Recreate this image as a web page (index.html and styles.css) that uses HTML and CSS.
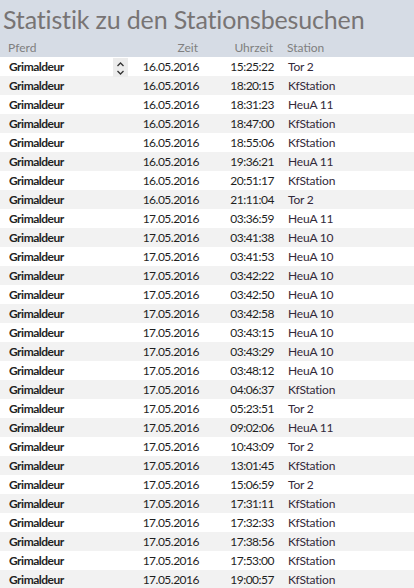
FILE: index.html
```html
<!DOCTYPE html>
<html lang="de">
<head>
<meta charset="utf-8">
<link rel="stylesheet" href="styles.css">
</head>
<body>
<div class="header">
  <h1 class="title">Statistik zu den Stationsbesuchen</h1>
  <div class="row cols">
    <span class="c-name">Pferd</span>
    <span class="c-spin"></span>
    <span class="c-date">Zeit</span>
    <span class="c-time">Uhrzeit</span>
    <span class="c-stat">Station</span>
  </div>
</div>
<div class="list">
  <div class="row item"><span class="c-name">Grimaldeur</span><span class="c-spin"><span class="spinner"><svg width="15" height="19" viewBox="0 0 15 19"><path d="M4.5 8 L7.5 5 L10.5 8" fill="none" stroke="#333" stroke-width="1.3"/><path d="M4.5 13 L7.5 16 L10.5 13" fill="none" stroke="#333" stroke-width="1.3"/></svg></span></span><span class="c-date">16.05.2016</span><span class="c-time">15:25:22</span><span class="c-stat">Tor 2</span></div>
  <div class="row item"><span class="c-name">Grimaldeur</span><span class="c-spin"></span><span class="c-date">16.05.2016</span><span class="c-time">18:20:15</span><span class="c-stat">KfStation</span></div>
  <div class="row item"><span class="c-name">Grimaldeur</span><span class="c-spin"></span><span class="c-date">16.05.2016</span><span class="c-time">18:31:23</span><span class="c-stat">HeuA 11</span></div>
  <div class="row item"><span class="c-name">Grimaldeur</span><span class="c-spin"></span><span class="c-date">16.05.2016</span><span class="c-time">18:47:00</span><span class="c-stat">KfStation</span></div>
  <div class="row item"><span class="c-name">Grimaldeur</span><span class="c-spin"></span><span class="c-date">16.05.2016</span><span class="c-time">18:55:06</span><span class="c-stat">KfStation</span></div>
  <div class="row item"><span class="c-name">Grimaldeur</span><span class="c-spin"></span><span class="c-date">16.05.2016</span><span class="c-time">19:36:21</span><span class="c-stat">HeuA 11</span></div>
  <div class="row item"><span class="c-name">Grimaldeur</span><span class="c-spin"></span><span class="c-date">16.05.2016</span><span class="c-time">20:51:17</span><span class="c-stat">KfStation</span></div>
  <div class="row item"><span class="c-name">Grimaldeur</span><span class="c-spin"></span><span class="c-date">16.05.2016</span><span class="c-time">21:11:04</span><span class="c-stat">Tor 2</span></div>
  <div class="row item"><span class="c-name">Grimaldeur</span><span class="c-spin"></span><span class="c-date">17.05.2016</span><span class="c-time">03:36:59</span><span class="c-stat">HeuA 11</span></div>
  <div class="row item"><span class="c-name">Grimaldeur</span><span class="c-spin"></span><span class="c-date">17.05.2016</span><span class="c-time">03:41:38</span><span class="c-stat">HeuA 10</span></div>
  <div class="row item"><span class="c-name">Grimaldeur</span><span class="c-spin"></span><span class="c-date">17.05.2016</span><span class="c-time">03:41:53</span><span class="c-stat">HeuA 10</span></div>
  <div class="row item"><span class="c-name">Grimaldeur</span><span class="c-spin"></span><span class="c-date">17.05.2016</span><span class="c-time">03:42:22</span><span class="c-stat">HeuA 10</span></div>
  <div class="row item"><span class="c-name">Grimaldeur</span><span class="c-spin"></span><span class="c-date">17.05.2016</span><span class="c-time">03:42:50</span><span class="c-stat">HeuA 10</span></div>
  <div class="row item"><span class="c-name">Grimaldeur</span><span class="c-spin"></span><span class="c-date">17.05.2016</span><span class="c-time">03:42:58</span><span class="c-stat">HeuA 10</span></div>
  <div class="row item"><span class="c-name">Grimaldeur</span><span class="c-spin"></span><span class="c-date">17.05.2016</span><span class="c-time">03:43:15</span><span class="c-stat">HeuA 10</span></div>
  <div class="row item"><span class="c-name">Grimaldeur</span><span class="c-spin"></span><span class="c-date">17.05.2016</span><span class="c-time">03:43:29</span><span class="c-stat">HeuA 10</span></div>
  <div class="row item"><span class="c-name">Grimaldeur</span><span class="c-spin"></span><span class="c-date">17.05.2016</span><span class="c-time">03:48:12</span><span class="c-stat">HeuA 10</span></div>
  <div class="row item"><span class="c-name">Grimaldeur</span><span class="c-spin"></span><span class="c-date">17.05.2016</span><span class="c-time">04:06:37</span><span class="c-stat">KfStation</span></div>
  <div class="row item"><span class="c-name">Grimaldeur</span><span class="c-spin"></span><span class="c-date">17.05.2016</span><span class="c-time">05:23:51</span><span class="c-stat">Tor 2</span></div>
  <div class="row item"><span class="c-name">Grimaldeur</span><span class="c-spin"></span><span class="c-date">17.05.2016</span><span class="c-time">09:02:06</span><span class="c-stat">HeuA 11</span></div>
  <div class="row item"><span class="c-name">Grimaldeur</span><span class="c-spin"></span><span class="c-date">17.05.2016</span><span class="c-time">10:43:09</span><span class="c-stat">Tor 2</span></div>
  <div class="row item"><span class="c-name">Grimaldeur</span><span class="c-spin"></span><span class="c-date">17.05.2016</span><span class="c-time">13:01:45</span><span class="c-stat">KfStation</span></div>
  <div class="row item"><span class="c-name">Grimaldeur</span><span class="c-spin"></span><span class="c-date">17.05.2016</span><span class="c-time">15:06:59</span><span class="c-stat">Tor 2</span></div>
  <div class="row item"><span class="c-name">Grimaldeur</span><span class="c-spin"></span><span class="c-date">17.05.2016</span><span class="c-time">17:31:11</span><span class="c-stat">KfStation</span></div>
  <div class="row item"><span class="c-name">Grimaldeur</span><span class="c-spin"></span><span class="c-date">17.05.2016</span><span class="c-time">17:32:33</span><span class="c-stat">KfStation</span></div>
  <div class="row item"><span class="c-name">Grimaldeur</span><span class="c-spin"></span><span class="c-date">17.05.2016</span><span class="c-time">17:38:56</span><span class="c-stat">KfStation</span></div>
  <div class="row item"><span class="c-name">Grimaldeur</span><span class="c-spin"></span><span class="c-date">17.05.2016</span><span class="c-time">17:53:00</span><span class="c-stat">KfStation</span></div>
  <div class="row item"><span class="c-name">Grimaldeur</span><span class="c-spin"></span><span class="c-date">17.05.2016</span><span class="c-time">19:00:57</span><span class="c-stat">KfStation</span></div>
</div>
</body>
</html>
```

FILE: styles.css
```css
html, body {
  margin: 0;
  padding: 0;
  background: #ffffff;
  font-family: "Lato", "Open Sans", sans-serif;
  overflow: hidden;
}

.header {
  background: #d6dce5;
  height: 57px;
  box-sizing: border-box;
}

.title {
  margin: 0;
  padding: 3px 0 0 3px;
  height: 38px;
  box-sizing: border-box;
  font-weight: 400;
  font-size: 25px;
  letter-spacing: -0.15px;
  line-height: 32px;
  color: #787474;
  white-space: nowrap;
}

.row {
  display: grid;
  grid-template-columns: 102px 28px 60px 75px 1fr;
  padding-left: 9px;
  align-items: center;
  white-space: nowrap;
}

.cols {
  height: 19px;
  font-size: 12px;
  color: #7f7f7f;
  padding-left: 8px;
}

.item {
  height: 19px;
  font-size: 12px;
  letter-spacing: -0.5px;
  color: #1f1f1f;
}

.item:nth-child(even) {
  background: #f2f2f2;
}

.item .c-name { font-weight: 700; }
.c-date, .c-time { text-align: right; }
.c-stat { padding-left: 14px; }
.item .c-stat { color: #33293a; letter-spacing: -0.2px; }

.c-spin {
  display: flex;
  align-items: stretch;
  height: 19px;
}

.spinner {
  display: block;
  width: 15px;
  height: 19px;
  margin-left: 2px;
  margin-top: 1px;
  background: #ececec;
}
.spinner svg { display: block; }
```
